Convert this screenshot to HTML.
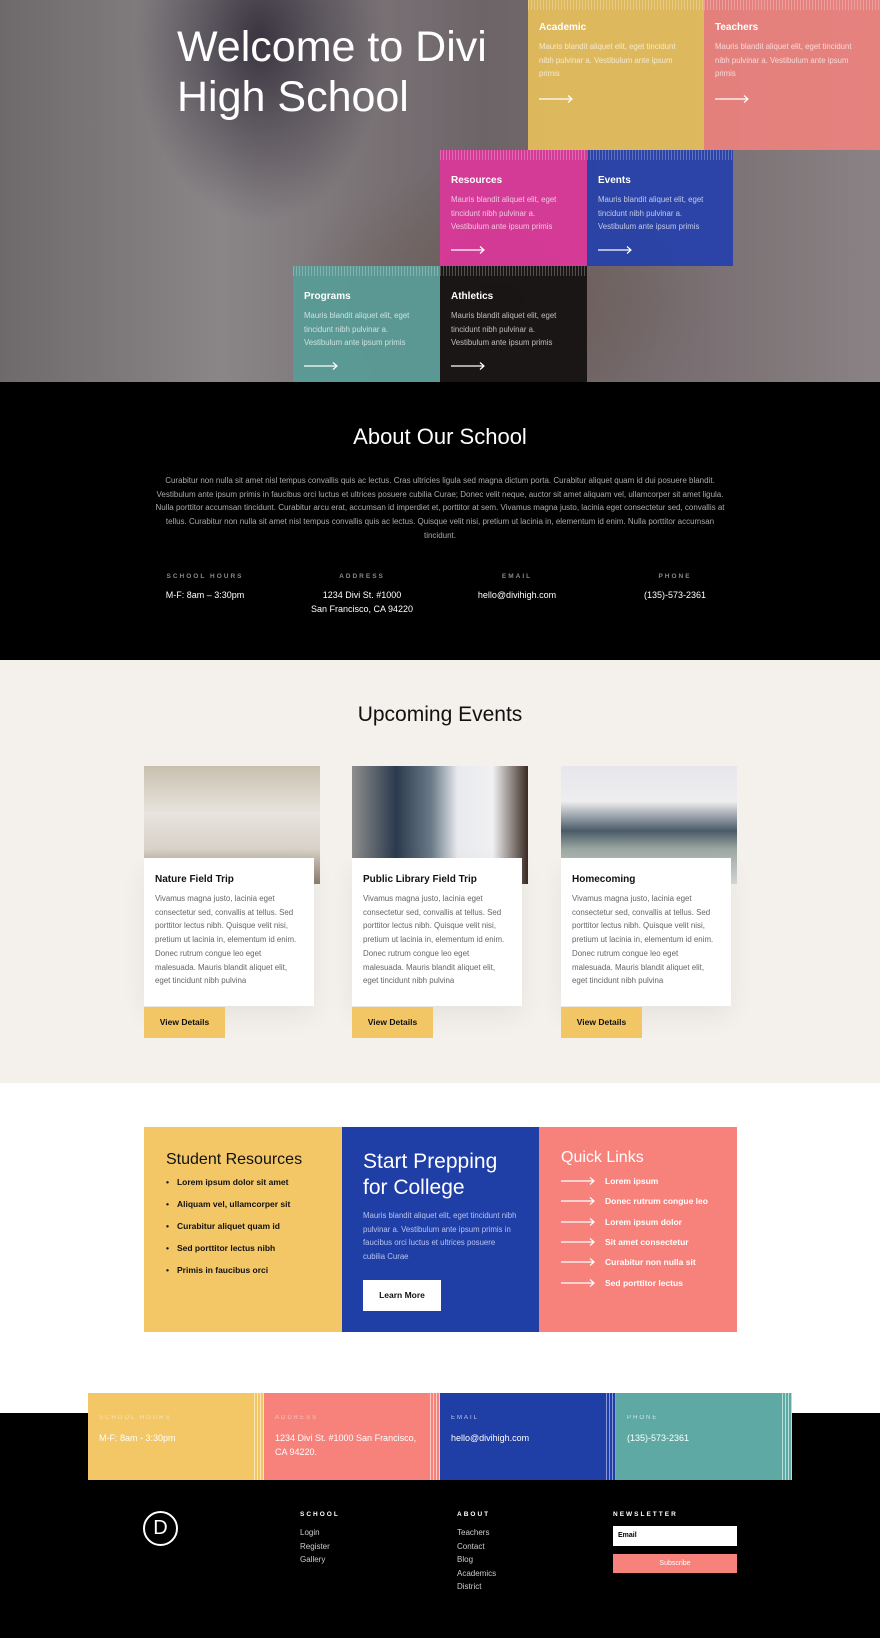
<!DOCTYPE html>
<html><head><meta charset="utf-8"><style>
*{margin:0;padding:0;box-sizing:border-box}
body{width:880px;height:1638px;position:relative;font-family:"Liberation Sans",sans-serif;background:#fff;overflow:hidden}
.a{position:absolute}
.hero{left:0;top:0;width:880px;height:382px;background:radial-gradient(ellipse 180px 260px at 260px 40px,#3a3440 0%,transparent 70%),radial-gradient(ellipse 300px 200px at 500px 300px,#6b5a55 0%,transparent 70%),linear-gradient(90deg,#6e6a6c 0%,#8a8688 25%,#6d6468 55%,#7a7073 80%,#8a8284 100%)}
.tile{position:absolute;padding:22px 11px 0;color:#fff}
.tile h4{font-size:10px;font-weight:bold;margin-bottom:7px}
.tile p{font-size:7.8px;line-height:13.5px;opacity:.7}
.tile .ar{display:block;margin-top:14px;width:34px;height:8px}
.str{position:absolute;left:0;top:0;right:0;height:10px;background:repeating-linear-gradient(90deg,rgba(255,255,255,.25) 0 1px,transparent 1px 3px)}
.lbl{font-size:6.5px;letter-spacing:2px;font-weight:bold}
.card{position:absolute;width:176px}
.card .img{height:118px}
.card .w{position:absolute;top:92px;left:0;width:170px;height:148px;background:#fff;padding:16px 11px;box-shadow:0 10px 25px rgba(0,0,0,.06)}
.card h4{font-size:10px;margin-bottom:7px;color:#111}
.card p{font-size:7.9px;line-height:13.7px;color:#666}
.card .b{position:absolute;top:241px;left:0;width:81px;height:31px;background:#f2c665;font-size:8.5px;font-weight:bold;line-height:31px;text-align:center;color:#111}
ul{list-style:none}
.sr li{font-size:8.5px;font-weight:bold;margin-bottom:12px;color:#111}
.sr li:before{content:"•";margin-right:8px}
.ql div{font-size:8.5px;font-weight:bold;color:#fff;height:20.3px;display:flex;align-items:center}
.ql svg{margin-right:10px}
.cb{position:absolute;top:1393px;height:87px;padding:22px 11px;color:#fff}
.cb .lbl{font-size:6px;opacity:.5;margin-bottom:10px;font-weight:normal}
.cb .v{font-size:9px;line-height:14px}
.fc h5{font-size:6.5px;letter-spacing:2px;color:#fff;margin-bottom:8px}
.fc div{font-size:8px;color:#ccc;line-height:13.5px}
.info{position:absolute;top:573px;width:160px;text-align:center;color:#fff}
</style></head><body>
<div class="a hero"></div>
<div class="a" style="left:177px;top:22px;color:#fff;font-size:43px;line-height:50px;font-weight:500">Welcome to Divi<br>High School</div>
<svg width="0" height="0" style="position:absolute"><defs><symbol id="ar" viewBox="0 0 34 8"><path d="M0 4H33M29 0.5L33 4L29 7.5" stroke="#fff" stroke-width="1.2" fill="none"/></symbol></defs></svg>
<div class="tile" style="left:528px;top:0;width:176px;height:150px;background:rgba(236,195,90,.88);padding-top:22px"><div class="str"></div><h4>Academic</h4><p style="width:150px">Mauris blandit aliquet elit, eget tincidunt nibh pulvinar a. Vestibulum ante ipsum primis</p><svg class="ar"><use href="#ar"/></svg></div>
<div class="tile" style="left:704px;top:0;width:176px;height:150px;background:rgba(240,130,125,.9);padding-top:22px"><div class="str"></div><h4>Teachers</h4><p style="width:150px">Mauris blandit aliquet elit, eget tincidunt nibh pulvinar a. Vestibulum ante ipsum primis</p><svg class="ar"><use href="#ar"/></svg></div>
<div class="tile" style="left:440px;top:150px;width:147px;height:116px;background:rgba(220,55,155,.92);padding-top:25px"><div class="str"></div><h4>Resources</h4><p style="width:115px">Mauris blandit aliquet elit, eget tincidunt nibh pulvinar a. Vestibulum ante ipsum primis</p><svg class="ar" style="margin-top:12px"><use href="#ar"/></svg></div>
<div class="tile" style="left:587px;top:150px;width:146px;height:116px;background:rgba(40,65,170,.95);padding-top:25px"><div class="str"></div><h4>Events</h4><p style="width:115px">Mauris blandit aliquet elit, eget tincidunt nibh pulvinar a. Vestibulum ante ipsum primis</p><svg class="ar" style="margin-top:12px"><use href="#ar"/></svg></div>
<div class="tile" style="left:293px;top:266px;width:147px;height:116px;background:rgba(90,155,150,.95);padding-top:25px"><div class="str"></div><h4>Programs</h4><p style="width:115px">Mauris blandit aliquet elit, eget tincidunt nibh pulvinar a. Vestibulum ante ipsum primis</p><svg class="ar" style="margin-top:12px"><use href="#ar"/></svg></div>
<div class="tile" style="left:440px;top:266px;width:147px;height:116px;background:rgba(22,18,18,.95);padding-top:25px"><div class="str"></div><h4>Athletics</h4><p style="width:115px">Mauris blandit aliquet elit, eget tincidunt nibh pulvinar a. Vestibulum ante ipsum primis</p><svg class="ar" style="margin-top:12px"><use href="#ar"/></svg></div>

<div class="a" style="left:0;top:382px;width:880px;height:278px;background:#000"></div>
<div class="a" style="left:0;top:424px;width:880px;text-align:center;color:#fff;font-size:22px">About Our School</div>
<div class="a" style="left:150px;top:474px;width:580px;text-align:center;color:#aaa;font-size:8px;line-height:13.7px">Curabitur non nulla sit amet nisl tempus convallis quis ac lectus. Cras ultricies ligula sed magna dictum porta. Curabitur aliquet quam id dui posuere blandit. Vestibulum ante ipsum primis in faucibus orci luctus et ultrices posuere cubilia Curae; Donec velit neque, auctor sit amet aliquam vel, ullamcorper sit amet ligula. Nulla porttitor accumsan tincidunt. Curabitur arcu erat, accumsan id imperdiet et, porttitor at sem. Vivamus magna justo, lacinia eget consectetur sed, convallis at tellus. Curabitur non nulla sit amet nisl tempus convallis quis ac lectus. Quisque velit nisi, pretium ut lacinia in, elementum id enim. Nulla porttitor accumsan tincidunt.</div>
<div class="info" style="left:125px"><div class="lbl" style="color:#888;margin-bottom:8px">SCHOOL HOURS</div><div style="font-size:9px;line-height:14px">M-F: 8am – 3:30pm</div></div>
<div class="info" style="left:282px"><div class="lbl" style="color:#888;margin-bottom:8px">ADDRESS</div><div style="font-size:9px;line-height:14px">1234 Divi St. #1000<br>San Francisco, CA 94220</div></div>
<div class="info" style="left:437px"><div class="lbl" style="color:#888;margin-bottom:8px">EMAIL</div><div style="font-size:9px;line-height:14px">hello@divihigh.com</div></div>
<div class="info" style="left:595px"><div class="lbl" style="color:#888;margin-bottom:8px">PHONE</div><div style="font-size:9px;line-height:14px">(135)-573-2361</div></div>

<div class="a" style="left:0;top:660px;width:880px;height:423px;background:#f4f0eb"></div>
<div class="a" style="left:0;top:703px;width:880px;text-align:center;color:#111;font-size:21px">Upcoming Events</div>
<div class="card" style="left:144px;top:766px"><div class="img" style="background:linear-gradient(180deg,#c9bfae 0%,#e8e4de 40%,#d8d2c8 70%,#8a7c6e 100%)"></div><div class="w"><h4>Nature Field Trip</h4><p>Vivamus magna justo, lacinia eget consectetur sed, convallis at tellus. Sed porttitor lectus nibh. Quisque velit nisi, pretium ut lacinia in, elementum id enim. Donec rutrum congue leo eget malesuada. Mauris blandit aliquet elit, eget tincidunt nibh pulvina</p></div><div class="b">View Details</div></div>
<div class="card" style="left:352px;top:766px"><div class="img" style="background:linear-gradient(90deg,#8d8e8c 0%,#2c3a4e 25%,#6a7a88 45%,#e8eaee 60%,#f0f0f2 80%,#3a2a22 100%)"></div><div class="w"><h4>Public Library Field Trip</h4><p>Vivamus magna justo, lacinia eget consectetur sed, convallis at tellus. Sed porttitor lectus nibh. Quisque velit nisi, pretium ut lacinia in, elementum id enim. Donec rutrum congue leo eget malesuada. Mauris blandit aliquet elit, eget tincidunt nibh pulvina</p></div><div class="b">View Details</div></div>
<div class="card" style="left:561px;top:766px"><div class="img" style="background:linear-gradient(180deg,#e6e6ec 0%,#eeeef0 30%,#4a5a68 55%,#9aa6a0 70%,#d8d8dc 100%)"></div><div class="w"><h4>Homecoming</h4><p>Vivamus magna justo, lacinia eget consectetur sed, convallis at tellus. Sed porttitor lectus nibh. Quisque velit nisi, pretium ut lacinia in, elementum id enim. Donec rutrum congue leo eget malesuada. Mauris blandit aliquet elit, eget tincidunt nibh pulvina</p></div><div class="b">View Details</div></div>

<div class="a" style="left:144px;top:1127px;width:198px;height:205px;background:#f3c766;padding:24px 22px">
<div style="font-size:16px;color:#111;margin-bottom:8px">Student Resources</div>
<ul class="sr"><li>Lorem ipsum dolor sit amet</li><li>Aliquam vel, ullamcorper sit</li><li>Curabitur aliquet quam id</li><li>Sed porttitor lectus nibh</li><li>Primis in faucibus orci</li></ul></div>
<div class="a" style="left:342px;top:1127px;width:197px;height:205px;background:#1f3ea6;padding:22px 21px;color:#fff">
<div style="font-size:21px;line-height:26px;margin-bottom:8px">Start Prepping for College</div>
<div style="font-size:7.8px;line-height:13.7px;color:#b8c4ee">Mauris blandit aliquet elit, eget tincidunt nibh pulvinar a. Vestibulum ante ipsum primis in faucibus orci luctus et ultrices posuere cubilia Curae</div>
<div style="margin-top:16px;width:78px;height:31px;background:#fff;color:#111;font-size:8.5px;font-weight:bold;text-align:center;line-height:31px">Learn More</div></div>
<div class="a ql" style="left:539px;top:1127px;width:198px;height:205px;background:#f7827b;padding:22px 22px">
<div style="font-size:16px;font-weight:normal;height:auto;margin-bottom:4px">Quick Links</div>
<div><svg width="34" height="8"><use href="#ar"/></svg>Lorem ipsum</div>
<div><svg width="34" height="8"><use href="#ar"/></svg>Donec rutrum congue leo</div>
<div><svg width="34" height="8"><use href="#ar"/></svg>Lorem ipsum dolor</div>
<div><svg width="34" height="8"><use href="#ar"/></svg>Sit amet consectetur</div>
<div><svg width="34" height="8"><use href="#ar"/></svg>Curabitur non nulla sit</div>
<div><svg width="34" height="8"><use href="#ar"/></svg>Sed porttitor lectus</div></div>

<div class="a" style="left:0;top:1413px;width:880px;height:225px;background:#000"></div>
<div class="cb" style="left:88px;width:176px;background:#f3c766"><div class="lbl">SCHOOL HOURS</div><div class="v">M-F: 8am - 3:30pm</div><div style="position:absolute;right:0;top:0;width:10px;height:87px;background:repeating-linear-gradient(90deg,#fbe7b5 0 1px,#f3c766 1px 3px)"></div></div>
<div class="cb" style="left:264px;width:176px;background:#f7827b"><div class="lbl">ADDRESS</div><div class="v">1234 Divi St. #1000 San Francisco, CA 94220.</div><div style="position:absolute;right:0;top:0;width:10px;height:87px;background:repeating-linear-gradient(90deg,#fcc8c4 0 1px,#f7827b 1px 3px)"></div></div>
<div class="cb" style="left:440px;width:176px;background:#1f3ea6"><div class="lbl" style="opacity:.7">EMAIL</div><div class="v">hello@divihigh.com</div><div style="position:absolute;right:0;top:0;width:10px;height:87px;background:repeating-linear-gradient(90deg,#8a9ad8 0 1px,#1f3ea6 1px 3px)"></div></div>
<div class="cb" style="left:616px;width:176px;background:#5ea9a3"><div class="lbl" style="opacity:.7">PHONE</div><div class="v">(135)-573-2361</div><div style="position:absolute;right:0;top:0;width:10px;height:87px;background:repeating-linear-gradient(90deg,#b8dcd8 0 1px,#5ea9a3 1px 3px)"></div></div>

<div class="a" style="left:143px;top:1511px;width:35px;height:35px;border:2.5px solid #fff;border-radius:50%;color:#fff;font-size:20px;text-align:center;line-height:30px">D</div>
<div class="a fc" style="left:300px;top:1511px"><h5>SCHOOL</h5><div>Login<br>Register<br>Gallery</div></div>
<div class="a fc" style="left:457px;top:1511px"><h5>ABOUT</h5><div>Teachers<br>Contact<br>Blog<br>Academics<br>District</div></div>
<div class="a fc" style="left:613px;top:1511px"><h5>NEWSLETTER</h5></div>
<div class="a" style="left:613px;top:1526px;width:124px;height:20px;background:#fff;font-size:7px;font-weight:bold;padding-left:5px;line-height:20px">Email</div>
<div class="a" style="left:613px;top:1554px;width:124px;height:19px;background:#f7827b;font-size:7px;color:#fff;text-align:center;line-height:19px">Subscribe</div>
</body></html>
